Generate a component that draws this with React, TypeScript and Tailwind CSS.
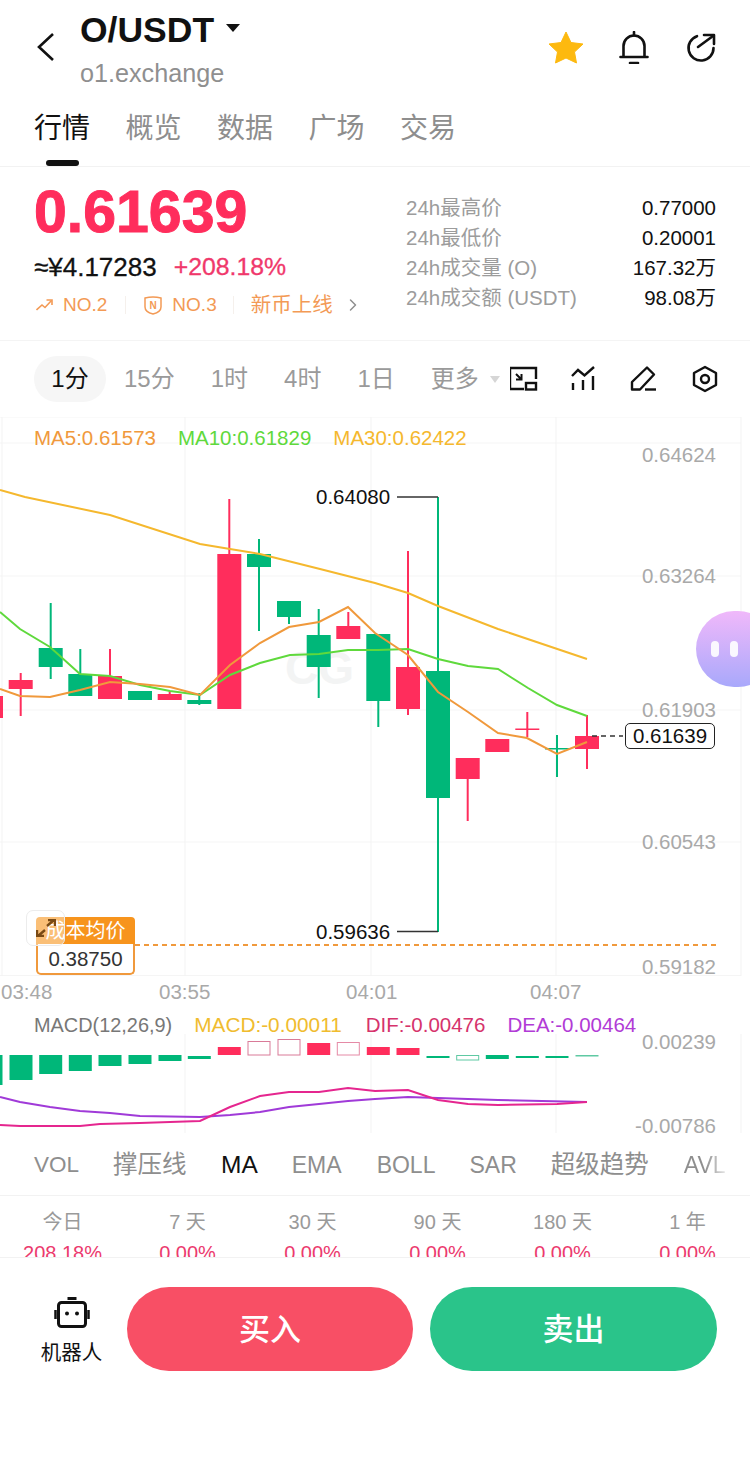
import { ChevronRight } from "lucide-react"

const RED = "#ff2d5c"
const GREEN = "#00b779"

// center x, high, body top, body bottom, low, colour (page pixels)
const candles: [number, number, number, number, number, string][] = [
  [-9, 696, 696, 718, 718, RED],
  [20.7, 673, 680, 689, 716, RED],
  [50.7, 603, 648, 667, 679, GREEN],
  [80.3, 649, 674, 696, 696, GREEN],
  [110, 649, 676, 699, 699, RED],
  [140, 691, 691, 700, 700, GREEN],
  [169.7, 691, 694, 700, 700, RED],
  [199.3, 693, 700, 704, 705, GREEN],
  [229.3, 499, 554, 709, 709, RED],
  [259, 539, 554, 567, 631, GREEN],
  [289, 601, 601, 617, 624, GREEN],
  [318.7, 609, 635, 667, 698, GREEN],
  [348.3, 612, 626, 639, 639, RED],
  [378.3, 634, 634, 701, 727, GREEN],
  [408, 551, 667, 709, 715, RED],
  [438, 497, 671, 798, 932, GREEN],
  [467.7, 758, 758, 779, 821, RED],
  [497.3, 739, 739, 752, 752, RED],
  [527.3, 712, 728.5, 730, 737, RED],
  [557, 735, 748, 749.5, 777, GREEN],
  [587, 715, 736, 749, 769, RED],
]

const ma30 = "0,490 25,497 110,515 200,544 230,549 260,554 320,569 375,583 408,593 438,606 498,629 587,659"
const ma10 = "0,612 20,629 50,647 80,674 110,676 140,685 170,691 200,695 230,675 260,663 290,655 319,654 348,650 378,650 408,649 438,659 468,666 498,669 528,688 557,705 587,716"
const ma5 = "0,689 20,696 50,697 80,690 110,682 140,684 170,687 200,695 230,665 260,643 289,627 319,622 348,607 375,633 408,655 438,692 468,712 498,733 527,738 557,754 587,742"

// center x, top, bottom, colour, hollow
const macdBars: [number, number, number, string, boolean][] = [
  [-9, 1055, 1085, GREEN, false],
  [21, 1055, 1080, GREEN, false],
  [50.7, 1055, 1074, GREEN, false],
  [80.3, 1055, 1071, GREEN, false],
  [110, 1055, 1066, GREEN, false],
  [140, 1055, 1064, GREEN, false],
  [170, 1055, 1061, GREEN, false],
  [199.3, 1056, 1059, GREEN, false],
  [229.3, 1047, 1055, RED, false],
  [259, 1041, 1055, "#d97a98", true],
  [289, 1039, 1055, "#d97a98", true],
  [318.7, 1043, 1055, RED, false],
  [348.3, 1042, 1055, "#e58aa6", true],
  [378.3, 1047, 1055, RED, false],
  [408, 1048, 1055, RED, false],
  [438, 1056, 1058, GREEN, false],
  [467.7, 1055, 1060, "#5fc9a3", true],
  [497.3, 1055, 1059, GREEN, false],
  [527.3, 1056, 1058, GREEN, false],
  [557, 1056, 1058, GREEN, false],
  [587, 1055, 1056.5, "#5fc9a3", false],
]
const dif = "0,1125 20,1126 80,1126 100,1124 140,1123 200,1121 230,1107 260,1096 289,1092 319,1092 348,1088 375,1091 408,1090 438,1100 468,1104 498,1105 557,1104 587,1102"
const dea = "0,1097 20,1102 50,1107 80,1111 110,1113 140,1116 200,1117 230,1115 260,1112 289,1107 319,1104 348,1101 375,1099 408,1097 438,1098 498,1100 587,1102"

const stats = [
  ["24h最高价", "0.77000"],
  ["24h最低价", "0.20001"],
  ["24h成交量 (O)", "167.32万"],
  ["24h成交额 (USDT)", "98.08万"],
]
const periods = [
  ["今日", "208.18%"],
  ["7 天", "0.00%"],
  ["30 天", "0.00%"],
  ["90 天", "0.00%"],
  ["180 天", "0.00%"],
  ["1 年", "0.00%"],
]

function Header() {
  return (
    <div className="flex h-[100px] items-start">
      <svg className="ml-[36px] mt-[33px] shrink-0" width="20" height="28" viewBox="0 0 20 28" fill="none" stroke="#111" strokeWidth="2.6">
        <path d="M17 1 L3 14 L17 27" />
      </svg>
      <div className="ml-[24px] flex flex-col">
        <div className="mt-[9px] flex items-center">
          <span className="text-[35.5px] font-bold leading-[42px] text-[#111]">O/USDT</span>
          <span className="ml-[12px] mt-[-4px] h-0 w-0 border-x-[7px] border-t-[8px] border-x-transparent border-t-[#111]" />
        </div>
        <span className="mt-[9px] text-[25.2px] leading-[26px] text-[#8f8f8f]">o1.exchange</span>
      </div>
      <div className="ml-auto mr-[34px] mt-[31px] flex items-start">
        <svg width="36" height="33" viewBox="0 0 36 33">
          <path d="M18 1 L23 11.5 L35 13 L26.5 21 L28.5 32 L18 27 L7.5 32 L9.5 21 L1 13 L13 11.5 Z" fill="#fdb90f" stroke="#fdb90f" strokeWidth="1" strokeLinejoin="round" />
        </svg>
        <svg className="ml-[35px]" width="30" height="33" viewBox="0 0 30 33" fill="none" stroke="#111" strokeWidth="2.6" strokeLinecap="round">
          <path d="M15 1 V4.5" />
          <path d="M4.5 25.5 V15 a10.5 10.5 0 0 1 21 0 V25.5" />
          <path d="M1.5 26 H28.5" />
          <path d="M11 32 H19" />
        </svg>
        <svg className="ml-[35px] mt-[2px]" width="32" height="30" viewBox="0 0 32 30" fill="none" stroke="#111" strokeWidth="2.6" strokeLinecap="round" strokeLinejoin="round">
          <path d="M13 3.2 A12.5 12.5 0 1 0 29.5 15" />
          <path d="M14 14 L29 3" />
          <path d="M20 2 H30 V11" />
        </svg>
      </div>
    </div>
  )
}

function Tabs() {
  return (
    <div className="relative flex h-[67px] gap-[35.5px] border-b border-[#f2f2f2] pl-[34px] pt-[10px]">
      {["行情", "概览", "数据", "广场", "交易"].map((t, i) => (
        <span key={t} className={`text-[28px] leading-[38px] ${i === 0 ? "text-[#111]" : "text-[#8e8e8e]"}`}>
          {t}
        </span>
      ))}
      <span className="absolute bottom-0 left-[46px] h-[6px] w-[33px] rounded-full bg-[#111]" />
    </div>
  )
}

function Price() {
  return (
    <div className="flex h-[173px] justify-between px-[34px]">
      <div className="flex flex-col pt-[17px]">
        <span className="text-[59px] font-bold leading-[57px] text-[#ff2d5c] [-webkit-text-stroke:1px_#ff2d5c]">0.61639</span>
        <div className="mt-[12px] flex h-[28px] items-center text-[26px] text-[#111] [-webkit-text-stroke:0.3px]">
          <span>≈¥4.17283</span>
          <span className="ml-[17px] text-[24.8px] text-[#f0386b]">+208.18%</span>
        </div>
        <div className="mt-[12px] flex h-[24px] items-center text-[19px] text-[#f39a55]">
          <svg className="ml-[2px]" width="17" height="12" viewBox="0 0 17 12" fill="none" stroke="#f39a55" strokeWidth="1.6">
            <path d="M0.5 11 L6 6 L9 8.5 L15.5 1.5" />
            <path d="M10.5 1 H16 V6" />
          </svg>
          <span className="ml-[10px]">NO.2</span>
          <span className="ml-[18px] h-[18px] w-px bg-[#f5f0ec]" />
          <svg className="ml-[18px]" width="18" height="19" viewBox="0 0 18 19" fill="none" stroke="#f39a55" strokeWidth="1.5">
            <path d="M1 2 Q9 0 17 2 V11 Q17 16 9 18 Q1 16 1 11 Z" />
            <text x="9" y="13" textAnchor="middle" fontSize="10" fontWeight="700" fill="#f39a55" stroke="none">N</text>
          </svg>
          <span className="ml-[10px]">NO.3</span>
          <span className="ml-[16px] h-[18px] w-px bg-[#f5f0ec]" />
          <span className="ml-[17px] text-[20.5px]">新币上线</span>
          <ChevronRight className="ml-[10px]" size={20} color="#8f8f8f" strokeWidth={1.8} />
        </div>
      </div>
      <div className="flex w-[310px] flex-col pt-[26px]">
        {stats.map(([k, v]) => (
          <div key={k} className="flex h-[30px] items-center justify-between text-[20.5px]">
            <span className="text-[#9c9c9c]">{k}</span>
            <span className="text-[#111]">{v}</span>
          </div>
        ))}
      </div>
    </div>
  )
}

function Timeframes() {
  return (
    <div className="flex h-[77px] items-center border-t border-[#f4f4f4] pl-[34px] pr-[30px] text-[24px] text-[#9a9a9a]">
      <span className="flex h-[46px] w-[72px] items-center justify-center rounded-full bg-[#f6f6f6] text-[#111]">1分</span>
      <div className="ml-[18px] flex gap-[36px]">
        <span>15分</span>
        <span>1时</span>
        <span>4时</span>
        <span>1日</span>
        <span>更多</span>
      </div>
      <span className="ml-[11px] h-0 w-0 border-x-[5px] border-t-[7px] border-x-transparent border-t-[#d6d6d6]" />
      <div className="ml-auto flex gap-[30px]">
        <svg width="30" height="30" viewBox="2 0 30 30" fill="none" stroke="#111" strokeWidth="2.4">
          <path d="M16 25 H2 V4 H28 V15" />
          <rect x="18" y="19" width="10" height="6.5" />
          <path d="M8 10 L13.5 15.5 M8 15.5 H13.5 V10" strokeWidth="2" />
        </svg>
        <svg width="30" height="30" viewBox="2 0 30 30" fill="none" stroke="#111" strokeWidth="2.4">
          <path d="M4 12 L10 6 L16.5 11.5 L26 3" />
          <path d="M5 19 V26 M15 16 V26 M25 12 V26" />
        </svg>
        <svg width="30" height="30" viewBox="1 0 30 30" fill="none" stroke="#111" strokeWidth="2.4" strokeLinejoin="round">
          <path d="M3 18 L18 3.5 L25 10.5 L11 25.5 H3 Z" />
          <path d="M16 25.5 H27" />
        </svg>
        <svg width="30" height="30" viewBox="0 0 30 30" fill="none" stroke="#111" strokeWidth="2.4" strokeLinejoin="round">
          <path d="M15 3 L26 9 V21 L15 27 L4 21 V9 Z" />
          <circle cx="15" cy="15" r="4" />
        </svg>
      </div>
    </div>
  )
}

function Candles() {
  return (
    <svg className="absolute inset-0" width="750" height="559" viewBox="0 417 750 559">
      {[417, 443, 576, 710, 842, 975.5].map((y) => (
        <line key={y} x1="0" x2="741" y1={y} y2={y} stroke="#f5f5f5" />
      ))}
      {[2, 185, 371, 556, 741].map((x) => (
        <line key={x} x1={x} x2={x} y1="417" y2="976" stroke="#f3f3f3" />
      ))}
      <text x="285" y="684" fontSize="46" fontWeight="700" fill="#f3f4f4">CG</text>
      {candles.map(([x, high, top, bottom, low, color]) => (
        <g key={x}>
          <line x1={x} x2={x} y1={high} y2={low} stroke={color} strokeWidth="2" />
          <rect x={x - 12} y={top} width="24" height={bottom - top} fill={color} />
        </g>
      ))}
      <polyline points={ma30} fill="none" stroke="#f5b82e" strokeWidth="2" />
      <polyline points={ma10} fill="none" stroke="#5fd93c" strokeWidth="2" />
      <polyline points={ma5} fill="none" stroke="#f0993c" strokeWidth="2" />
      <path d="M397 497 H438" stroke="#333" strokeWidth="1.5" />
      <path d="M397 931.5 H438" stroke="#333" strokeWidth="1.5" />
      <path d="M592 736 H623" stroke="#333" strokeWidth="1.5" strokeDasharray="5 4" />
      <path d="M135 945 H716" stroke="#f0993c" strokeWidth="2" strokeDasharray="5 4" />
    </svg>
  )
}

function MainChart() {
  const axis = [
    ["0.64624", 26],
    ["0.63264", 147],
    ["0.61903", 281],
    ["0.60543", 413],
    ["0.59182", 538],
  ] as const
  return (
    <div className="relative h-[559px] text-[20.5px]">
      <Candles />
      <div className="absolute left-[34px] top-[9px] flex gap-[22px] leading-[24px]">
        <span className="text-[#f0993c]">MA5:0.61573</span>
        <span className="text-[#5fd93c]">MA10:0.61829</span>
        <span className="text-[#f5b82e]">MA30:0.62422</span>
      </div>
      {axis.map(([v, y]) => (
        <span key={v} className="absolute right-[34px] leading-[24px] text-[#a9a9a9]" style={{ top: y }}>
          {v}
        </span>
      ))}
      <span className="absolute left-[316px] top-[68px] leading-[24px] text-[#111]">0.64080</span>
      <span className="absolute left-[316px] top-[503px] leading-[24px] text-[#111]">0.59636</span>
      <span className="absolute left-[625px] top-[306px] flex h-[26px] w-[90px] items-center justify-center rounded-[5px] border-[1.5px] border-[#222] bg-white text-[#111]">
        0.61639
      </span>
      <div className="absolute left-[36px] top-[500px] flex w-[99px] flex-col">
        <span className="flex h-[27px] items-center justify-center rounded-t-[4px] bg-[#f7941d] pt-[1px] text-[20px] text-white">成本均价</span>
        <span className="flex h-[31px] items-center justify-center rounded-b-[5px] border-2 border-t-0 border-[#f0993c] bg-white pt-[2px] text-[#333]">0.38750</span>
      </div>
      <div className="absolute left-[26px] top-[493px] flex h-[36px] w-[39px] items-center justify-center rounded-[7px] border border-[#ececec] bg-white/40">
        <svg width="20" height="18" viewBox="0 0 20 18" fill="none" stroke="#7a4a14" strokeWidth="2.4">
          <path d="M11 7 L18 1 M12 1 H19 V7" />
          <path d="M9 11 L2 17 M8 17 H1 V11" />
        </svg>
      </div>
    </div>
  )
}

function TimeAxis() {
  const ticks = [["03:48", 1], ["03:55", 159], ["04:01", 346], ["04:07", 530]] as const
  return (
    <div className="relative h-[32px] text-[20.5px] text-[#a9a9a9]">
      {ticks.map(([t, x]) => (
        <span key={t} className="absolute top-[4px] leading-[24px]" style={{ left: x }}>
          {t}
        </span>
      ))}
    </div>
  )
}

function Macd() {
  return (
    <div className="relative h-[125px] text-[20.5px]">
      <svg className="absolute inset-0" width="750" height="125" viewBox="0 1008 750 125">
        {[185, 371, 556, 741].map((x) => (
          <line key={x} x1={x} x2={x} y1="1034" y2="1133" stroke="#f3f3f3" />
        ))}
        {macdBars.map(([x, top, bottom, color, hollow]) =>
          hollow ? (
            <rect key={x} x={x - 11} y={top + 0.5} width="22" height={bottom - top - 0.5} fill="#fff" stroke={color} />
          ) : (
            <rect key={x} x={x - 11.5} y={top} width="23" height={bottom - top} fill={color} />
          ),
        )}
        <polyline points={dea} fill="none" stroke="#a03ad8" strokeWidth="2" />
        <polyline points={dif} fill="none" stroke="#e5268f" strokeWidth="2" />
      </svg>
      <div className="absolute left-[34px] top-[5px] flex leading-[24px]">
        <span className="text-[19.9px] text-[#777]">MACD(12,26,9)</span>
        <span className="ml-[22px] text-[20.8px] text-[#f0bc2f]">MACD:-0.00011</span>
        <span className="ml-[24px] text-[#d6336c]">DIF:-0.00476</span>
        <span className="ml-[22px] text-[#b13bd6]">DEA:-0.00464</span>
      </div>
      <span className="absolute right-[34px] top-[22px] leading-[24px] text-[#a9a9a9]">0.00239</span>
      <span className="absolute right-[34px] top-[106px] leading-[24px] text-[#a9a9a9]">-0.00786</span>
    </div>
  )
}

function Indicators() {
  return (
    <div className="flex h-[63px] items-center gap-[34px] overflow-hidden border-b border-[#f2f2f2] pl-[34px] pt-[2px] text-[23px] text-[#8e8e8e]">
      <span className="text-[22.5px]">VOL</span>
      <span className="text-[24.5px]">撑压线</span>
      <span className="ml-[0.5px] text-[24.5px] text-[#111]">MA</span>
      <span>EMA</span>
      <span className="ml-[1px]">BOLL</span>
      <span>SAR</span>
      <span className="text-[24.5px]">超级趋势</span>
      <span className="ml-[1px] bg-gradient-to-r from-[#8e8e8e] via-[#8e8e8e] to-[#e8e8e8] bg-clip-text text-transparent">AVL</span>
    </div>
  )
}

function Periods() {
  return (
    <div className="grid h-[61px] grid-cols-6 overflow-hidden text-[20px]">
      {periods.map(([k, v]) => (
        <div key={k} className="flex flex-col items-center pt-[14px]">
          <span className="leading-[24px] text-[#9a9a9a]">{k}</span>
          <span className="mt-[7px] leading-[24px] text-[#ec3a6e]">{v}</span>
        </div>
      ))}
    </div>
  )
}

function Footer() {
  return (
    <div className="flex h-[218px] items-start border-t border-[#f2f2f2] pl-[36px] pr-[33px] pt-[29px]">
      <div className="flex w-[71px] flex-col items-center pt-[10px]">
        <svg width="36" height="31" viewBox="0 0 36 31" fill="none" stroke="#111" strokeWidth="3">
          <path d="M13.5 1.5 H22.5" />
          <rect x="4.5" y="5.5" width="27" height="24" rx="3" />
          <path d="M1.5 13 V22 M34.5 13 V22" strokeWidth="2.5" />
          <circle cx="13" cy="16.5" r="2" fill="#111" stroke="none" />
          <circle cx="23" cy="16.5" r="2" fill="#111" stroke="none" />
        </svg>
        <span className="mt-[12px] whitespace-nowrap text-[20.5px] leading-[26px] text-[#111]">机器人</span>
      </div>
      <button className="ml-[20px] flex h-[84px] w-[286px] items-center justify-center rounded-full bg-[#f84f65] pt-[3px] text-[31px] font-medium text-white">买入</button>
      <button className="ml-[17px] flex h-[84px] w-[287px] items-center justify-center rounded-full bg-[#2ac48a] pt-[3px] text-[31px] font-medium text-white">卖出</button>
    </div>
  )
}

export default function App() {
  return (
    <div className="relative h-[1476px] w-[750px] overflow-hidden bg-white [font-family:'Liberation_Sans','Noto_Sans_CJK_SC',sans-serif]">
      <Header />
      <Tabs />
      <Price />
      <Timeframes />
      <MainChart />
      <TimeAxis />
      <Macd />
      <Indicators />
      <Periods />
      <Footer />
      {/* floating assistant */}
      <div className="absolute left-[696px] top-[611px] flex h-[76px] w-[80px] items-center gap-[11px] rounded-[38px] bg-gradient-to-b from-[#f0b8fa] to-[#a8a8fb] pl-[15px]">
        <span className="h-[16px] w-[8px] rounded-full bg-white/90" />
        <span className="h-[16px] w-[8px] rounded-full bg-white/90" />
      </div>
    </div>
  )
}
